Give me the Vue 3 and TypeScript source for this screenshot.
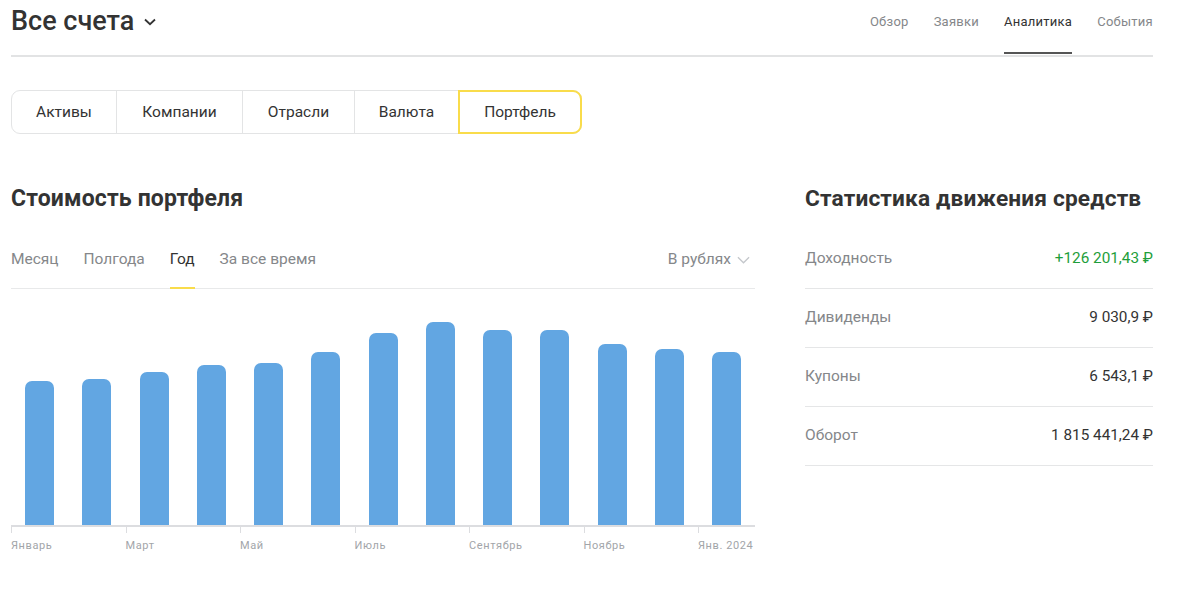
<script setup lang="ts">
const nav = [
  { label: 'Обзор', active: false },
  { label: 'Заявки', active: false },
  { label: 'Аналитика', active: true },
  { label: 'События', active: false },
]
const segments = ['Активы', 'Компании', 'Отрасли', 'Валюта', 'Портфель']
const periods = ['Месяц', 'Полгода', 'Год', 'За все время']
const bars = [144, 146, 153, 160, 162, 173, 192, 203, 195, 195, 181, 176, 173]
const ticks = ['Январь', 'Март', 'Май', 'Июль', 'Сентябрь', 'Ноябрь', 'Янв. 2024']
const stats = [
  { name: 'Доходность', value: '+126 201,43 ₽', up: true },
  { name: 'Дивиденды', value: '9 030,9 ₽', up: false },
  { name: 'Купоны', value: '6 543,1 ₽', up: false },
  { name: 'Оборот', value: '1 815 441,24 ₽', up: false },
]
</script>

<template>
  <div class="page">
    <header class="header">
      <div class="account">
        <h1>Все счета</h1>
        <svg class="caret" width="14" height="8" viewBox="0 0 14 8" fill="none">
          <path d="M2 1.5 7 6.2 12 1.5" stroke="#333" stroke-width="1.8" />
        </svg>
      </div>
      <nav class="nav">
        <a v-for="n in nav" :key="n.label" :class="{ active: n.active }">{{ n.label }}</a>
      </nav>
    </header>

    <div class="segments">
      <button v-for="s in segments" :key="s" :class="{ selected: s === 'Портфель' }">{{ s }}</button>
    </div>

    <div class="columns">
      <section class="left">
        <h2>Стоимость портфеля</h2>
        <div class="periods">
          <a v-for="p in periods" :key="p" :class="{ active: p === 'Год' }">{{ p }}</a>
          <div class="currency">
            В рублях
            <svg width="13" height="8" viewBox="0 0 14 8" fill="none">
              <path d="M1 1 7 7 13 1" stroke="#c4c7cb" stroke-width="1.4" />
            </svg>
          </div>
        </div>
        <div class="bars">
          <div v-for="(h, i) in bars" :key="i" class="bar" :style="{ height: h + 'px' }"></div>
        </div>
        <div class="axis">
          <span v-for="t in ticks" :key="t">{{ t }}</span>
        </div>
      </section>

      <section class="right">
        <h2>Статистика движения средств</h2>
        <ul class="stats">
          <li v-for="s in stats" :key="s.name">
            <span class="name">{{ s.name }}</span>
            <span class="value" :class="{ up: s.up }">{{ s.value }}</span>
          </li>
        </ul>
      </section>
    </div>
  </div>
</template>

<style>
html, body { background: #fff; }
</style>

<style scoped>
.page {
  width: 1142px;
  margin-left: 11px;
  font-family: Roboto, "Liberation Sans", sans-serif;
  color: #333;
}
.header {
  height: 57px;
  box-sizing: border-box;
  border-bottom: 2px solid #e2e3e4;
  display: flex;
  justify-content: space-between;
}
.account {
  display: flex;
  align-items: center;
  gap: 9px;
  height: 43px;
}
h1 {
  margin: 0;
  font-size: 27px;
  font-weight: 500;
  line-height: 43px;
  color: #333;
}
.caret { margin-top: 1px; }
.nav {
  display: flex;
  gap: 25px;
}
.nav a {
  height: 54px;
  box-sizing: border-box;
  padding-top: 13px;
  font-size: 13px;
  line-height: 18px;
  letter-spacing: 0.25px;
  color: #85878a;
}
.nav a.active {
  color: #333;
  border-bottom: 2px solid #555;
}
.segments {
  display: grid;
  grid-template-columns: 104px 126px 112px 104px 123px;
  width: fit-content;
  margin-top: 33px;
  height: 44px;
  box-sizing: border-box;
  border: 1px solid #e3e4e5;
  border-radius: 9px;
}
.segments button {
  all: unset;
  height: 42px;
  box-sizing: border-box;
  font-size: 15.5px;
  line-height: 40px;
  text-align: center;
  color: #333;
  border-left: 1px solid #e3e4e5;
}
.segments button:first-child { border-left: 0; }
.segments button.selected {
  height: 44px;
  margin: -1px -1px -1px 0;
  border: 2px solid #f9dc4b;
  border-radius: 0 9px 9px 0;
  line-height: 40px;
}
.columns {
  display: flex;
  justify-content: space-between;
  margin-top: 51px;
}
.left { width: 744px; }
.right { width: 348px; }
h2 {
  margin: 0;
  font-size: 23px;
  font-weight: 700;
  line-height: 28px;
  letter-spacing: 0.15px;
  color: #333;
}
.right h2 {
  font-size: 22.7px;
}
.periods {
  display: flex;
  gap: 25px;
  height: 62px;
  margin-top: 14px;
  box-sizing: border-box;
  border-bottom: 1px solid #e8e9ea;
}
.periods a {
  height: 62px;
  box-sizing: border-box;
  padding-top: 22px;
  font-size: 15.5px;
  line-height: 20px;
  color: #85878a;
}
.periods a.active {
  color: #333;
  border-bottom: 2px solid #f9dc4b;
}
.currency {
  margin-left: auto;
  margin-right: 5px;
  padding-top: 22px;
  display: flex;
  align-items: flex-start;
  gap: 6px;
  font-size: 15.5px;
  line-height: 20px;
  color: #85878a;
}
.currency svg { margin-top: 7px; }
.bars {
  height: 238px;
  box-sizing: border-box;
  padding: 0 14px;
  display: flex;
  justify-content: space-between;
  align-items: flex-end;
  border-bottom: 2px solid #dcdde0;
}
.bar {
  width: 29px;
  background: #62a6e2;
  border-radius: 7px 7px 0 0;
}
.axis {
  display: grid;
  grid-template-columns: repeat(6, 114.5px) 1fr;
}
.axis span {
  position: relative;
  padding-top: 12px;
  font-size: 11px;
  line-height: 14px;
  letter-spacing: 0.6px;
  color: #a2a5a9;
  white-space: nowrap;
}
.axis span::before {
  content: "";
  position: absolute;
  left: 0;
  top: -2px;
  width: 1px;
  height: 8px;
  background: #dcdde0;
}
.stats {
  list-style: none;
  margin: 17px 0 0;
  padding: 0;
}
.stats li {
  display: flex;
  justify-content: space-between;
  align-items: center;
  height: 59px;
  box-sizing: border-box;
  border-bottom: 1px solid #e5e6e7;
  padding-bottom: 2px;
}
.name {
  font-size: 15.5px;
  color: #85878a;
}
.value {
  font-size: 15.3px;
  color: #333;
}
.value.up { color: #1e9e3a; }
</style>
